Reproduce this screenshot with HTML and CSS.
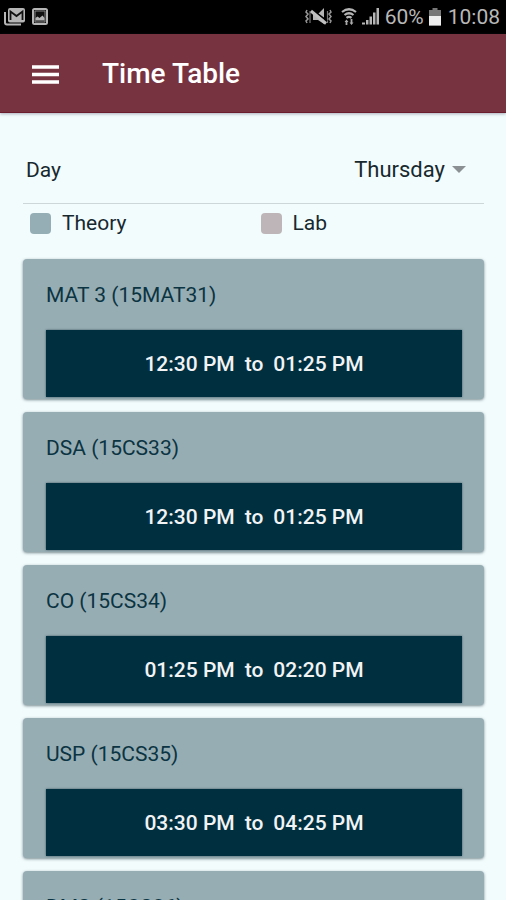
FILE: index.html
```html
<!DOCTYPE html>
<html lang="en">
<head>
<meta charset="utf-8">
<meta name="viewport" content="width=device-width, initial-scale=1">
<title>Time Table</title>
<link rel="stylesheet" href="styles.css">
</head>
<body>
<div class="status">
  <div class="status-group">
    <svg width="22" height="18" viewBox="0 0 22 18" aria-hidden="true">
      <path d="M1 4v10.500q0 2 2 2h14" fill="none" stroke="#b5b5b5" stroke-width="2"/>
      <rect x="4" y="0" width="17" height="14.500" rx="2" fill="#b5b5b5"/>
      <path d="M6.500 12V3.500l6 4.500 6-4.500V12" fill="none" stroke="#111" stroke-width="1.800"/>
    </svg>
    <svg width="16" height="18" viewBox="0 0 16 18" aria-hidden="true">
      <rect x="1" y="1" width="14" height="15" rx="1.500" fill="#111" stroke="#b5b5b5" stroke-width="2"/>
      <path d="M3 3h10v11H3z" fill="none" stroke="#888" stroke-width="1"/>
      <path d="M3.500 12.500V10l2-1.500L7.500 10l3-2.500 2 2.500v2.500z" fill="#b5b5b5"/>
    </svg>
  </div>
  <div class="status-group status-right">
    <svg class="mute" width="27" height="18" viewBox="0 0 27 18" aria-hidden="true">
      <path d="M2 2l-1 2 2 2-2 2.500 2 2.500-2 2 1 2M25 2l1 2-2 2 2 2.500-2 2.500 2 2-1 2" fill="none" stroke="#999" stroke-width="1.500"/>
      <path d="M5 3v12M22.500 3v12" fill="none" stroke="#777" stroke-width="1.200"/>
      <path d="M8 6h5l6-6v16l-6-4H8z" fill="#b5b5b5"/>
      <path d="M8 2.500l14 10.500" stroke="#000" stroke-width="2"/>
      <path d="M6 3l15 12.500" stroke="#c0c0c0" stroke-width="3"/>
    </svg>
    <svg width="16" height="18" viewBox="0 0 16 18" aria-hidden="true">
      <path d="M1 4q7-5.500 14 0M3.500 7q4.500-3.500 9 0M5.500 9.800q2.500-2 5 0" fill="none" stroke="#b5b5b5" stroke-width="2.200"/>
      <path d="M5.500 17v-4M10.500 11v4" stroke="#aaa" stroke-width="1.800"/>
      <path d="M3.500 14l2-2.500 2 2.500zM8.500 14.500l2 2.500 2-2.500z" fill="#aaa"/>
    </svg>
    <svg width="18" height="18" viewBox="0 0 18 18" aria-hidden="true">
      <path d="M0 16.500h3v-2H0zM4 16.500h2.500V12H4zM7.500 16.500H10V8.500H7.500zM11 16.500h2.500V4.500H11zM14.500 16.500H17V0h-2.500z" fill="#b5b5b5"/>
    </svg>
    <span>60%</span>
    <svg width="12" height="18" viewBox="0 0 12 18" aria-hidden="true">
      <path d="M0 2h3.500V0h5v2H12v15.500H0z" fill="#777"/>
      <path d="M0 8h12v9.500H0z" fill="#eee"/>
    </svg>
    <span class="clock">10:08</span>
  </div>
</div>
<header class="appbar">
  <button class="menu" type="button" aria-label="Menu">
    <svg width="27" height="19" viewBox="0 0 27 19" aria-hidden="true">
      <path d="M0 2h27M0 9.500h27M0 17h27" stroke="#fff" stroke-width="3.500"/>
    </svg>
  </button>
  <h1>Time Table</h1>
</header>
<main>
  <div class="day">
    <label for="day">Day</label>
    <div class="picker">
      <select id="day">
        <option>Monday</option>
        <option>Tuesday</option>
        <option>Wednesday</option>
        <option selected>Thursday</option>
        <option>Friday</option>
        <option>Saturday</option>
      </select>
      <svg width="14" height="8" viewBox="0 0 14 8" aria-hidden="true"><path d="M0 0h14L7 7z" fill="#8b9092"/></svg>
    </div>
  </div>
  <div class="legend">
    <div class="key"><span class="swatch theory"></span>Theory</div>
    <div class="key"><span class="swatch lab"></span>Lab</div>
  </div>
  <section class="card">
    <h2>MAT 3 (15MAT31)</h2>
    <div class="time"><span>12:30 PM</span><span>to</span><span>01:25 PM</span></div>
  </section>
  <section class="card">
    <h2>DSA (15CS33)</h2>
    <div class="time"><span>12:30 PM</span><span>to</span><span>01:25 PM</span></div>
  </section>
  <section class="card">
    <h2>CO (15CS34)</h2>
    <div class="time"><span>01:25 PM</span><span>to</span><span>02:20 PM</span></div>
  </section>
  <section class="card">
    <h2>USP (15CS35)</h2>
    <div class="time"><span>03:30 PM</span><span>to</span><span>04:25 PM</span></div>
  </section>
  <section class="card">
    <h2>DMS (15CS36)</h2>
  </section>
</main>
</body>
</html>
```
FILE: styles.css
```css
* { box-sizing: border-box; }

body {
  margin: 0;
  height: 100vh;
  display: flex;
  flex-direction: column;
  overflow: hidden;
  background: #f2fcfd;
  color: #17292f;
  font: 21px/26px Roboto, "Liberation Sans", sans-serif;
}

svg { display: block; flex: none; }

.status {
  flex: none;
  height: 34px;
  padding: 0 6px 0 4px;
  display: flex;
  align-items: center;
  justify-content: space-between;
  background: #000;
  color: #b8b8b8;
}

.status-group { display: flex; align-items: center; gap: 6px; }
.status-right { gap: 5px; }
.mute { margin-right: 4px; }
.clock { margin-left: 2px; }

.appbar {
  flex: none;
  height: 79px;
  padding: 2px 32px 0;
  display: flex;
  align-items: center;
  gap: 43px;
  background: #783341;
  border-bottom: 1px solid #6a1d2d;
  box-shadow: 0 1px 3px rgba(60, 60, 90, 0.4);
  color: #fff;
}

.menu { padding: 0; border: 0; background: none; }

h1 { margin: 0; font-size: 28px; line-height: 32px; font-weight: 500; }

main {
  flex: 1;
  min-height: 0;
  padding: 23px 22px 0 23px;
  overflow-y: auto;
  scrollbar-width: none;
}

.day {
  height: 68px;
  padding: 0 18px 0 3px;
  display: flex;
  align-items: center;
  justify-content: space-between;
  border-bottom: 1px solid #cdd6d8;
}

.picker { display: flex; align-items: center; gap: 7px; }

select {
  appearance: none;
  field-sizing: content;
  padding: 0;
  border: 0;
  background: none;
  color: inherit;
  font: inherit;
  font-size: 22px;
}

.legend {
  display: grid;
  grid-template-columns: 1fr 1fr;
  padding: 6px 0 23px;
}

.key { padding-left: 7px; display: flex; align-items: center; gap: 11px; }

.swatch { width: 21px; height: 21px; border-radius: 4px; }
.theory { background: #95adb4; }
.lab { background: #bdb5b7; }

.card {
  height: 140px;
  margin-bottom: 13px;
  padding: 23px 22px 2px 23px;
  display: flex;
  flex-direction: column;
  justify-content: space-between;
  border-radius: 4px;
  background: #97adb4;
  box-shadow: 0 1px 3px rgba(0, 30, 40, 0.5);
}

h2 { margin: 0; color: #0b3442; font-size: 21px; line-height: 26px; font-weight: 400; }

.time {
  height: 67px;
  display: flex;
  align-items: center;
  justify-content: center;
  gap: 10px;
  background: #002f3f;
  box-shadow: 0 0 2px rgba(0, 30, 40, 0.6);
  color: #f1f3f5;
  font-weight: 500;
}
```
